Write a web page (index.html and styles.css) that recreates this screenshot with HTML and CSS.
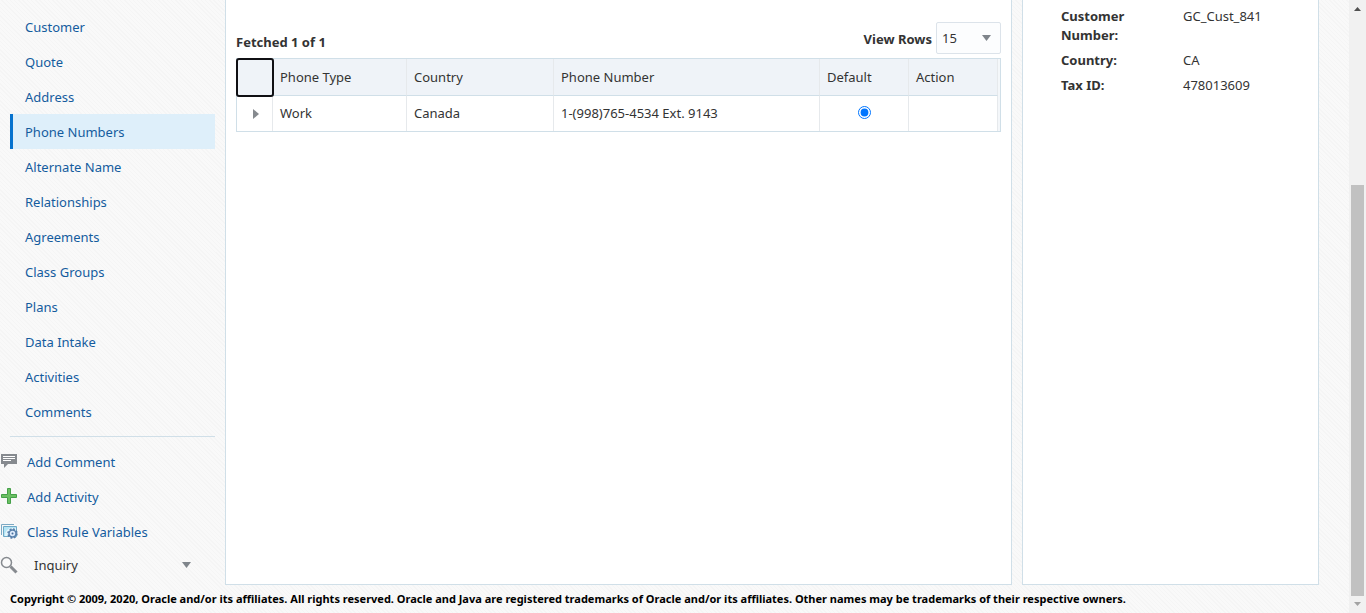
FILE: index.html
```html
<!DOCTYPE html>
<html lang="en">
<head>
<meta charset="utf-8">
<title>Phone Numbers</title>
<link rel="stylesheet" href="styles.css">
</head>
<body>
<div class="page">
  <div class="columns">
    <aside class="sidebar">
      <nav class="nav">
        <a class="nav-link" href="#">Customer</a>
        <a class="nav-link" href="#">Quote</a>
        <a class="nav-link" href="#">Address</a>
        <a class="nav-link nav-link-active" href="#" aria-current="page">Phone Numbers</a>
        <a class="nav-link" href="#">Alternate Name</a>
        <a class="nav-link" href="#">Relationships</a>
        <a class="nav-link" href="#">Agreements</a>
        <a class="nav-link" href="#">Class Groups</a>
        <a class="nav-link" href="#">Plans</a>
        <a class="nav-link" href="#">Data Intake</a>
        <a class="nav-link" href="#">Activities</a>
        <a class="nav-link" href="#">Comments</a>
      </nav>
      <div class="actions">
        <a class="action" href="#">
          <svg class="icon" viewBox="0 0 18 18" aria-hidden="true"><path fill="#868a8f" d="M1 2h16v10H8l-4 4v-4H1z"/><path stroke="#fff" d="M3 4.500h12M3 6.500h12M3 8.500h8"/></svg>
          <span>Add Comment</span>
        </a>
        <a class="action" href="#">
          <svg class="icon" viewBox="0 0 18 18" aria-hidden="true"><path fill="#6abf62" stroke="#45a049" stroke-linejoin="round" d="M7.500 1.500h3v6h6v3h-6v6h-3v-6h-6v-3h6z"/></svg>
          <span>Add Activity</span>
        </a>
        <a class="action" href="#">
          <svg class="icon" viewBox="0 0 18 18" aria-hidden="true"><path fill="none" stroke="#7ba9c4" d="M1.500 13V2.500H14"/><path fill="#b5e5f5" stroke="#6fa9c6" d="M3.500 4.500h13v10h-13z"/><path fill="#e4f6fc" d="M5 14a7 7 0 0 1 7-8h4v8z"/><circle cx="12.500" cy="11.500" r="4.500" fill="none" stroke="#587fab" stroke-width="1.500" stroke-dasharray="2 1.530"/><circle cx="12.500" cy="11.500" r="3.500" fill="#dceafa" stroke="#587fab" stroke-width="1.500"/><circle cx="12.500" cy="11.500" r="1" fill="#456c9c"/></svg>
          <span>Class Rule Variables</span>
        </a>
        <button class="inquiry" type="button" aria-haspopup="menu">
          <svg class="icon" viewBox="0 0 18 18" aria-hidden="true"><circle cx="6.500" cy="6.500" r="5" fill="#fafafa" stroke="#868a8f" stroke-width="1.500"/><path stroke="#868a8f" stroke-width="3" d="m10.500 10.500 6 6"/></svg>
          <span>Inquiry</span>
          <svg class="caret" viewBox="0 0 9 6" aria-hidden="true"><path fill="#7f858b" d="M0 0h9L4.500 6z"/></svg>
        </button>
      </div>
    </aside>
    <main class="panel">
      <div class="toolbar">
        <div class="fetched">Fetched 1 of 1</div>
        <div class="view-rows">
          <label class="view-label" for="rows">View Rows</label>
          <div class="select-box">
            <select class="select" id="rows"><option>15</option><option>30</option></select>
            <svg class="caret" viewBox="0 0 9 6" aria-hidden="true"><path fill="#7f858b" d="M0 0h9L4.500 6z"/></svg>
          </div>
        </div>
      </div>
      <div class="table-frame">
        <table class="table">
          <colgroup><col class="col-toggle"><col class="col-type"><col class="col-country"><col><col class="col-small"><col class="col-small"></colgroup>
          <thead>
            <tr><th class="focused" aria-label="Details"></th><th>Phone Type</th><th>Country</th><th>Phone Number</th><th>Default</th><th>Action</th></tr>
          </thead>
          <tbody>
            <tr>
              <td class="center"><button class="toggle" type="button" aria-label="Expand row"><svg class="toggle-icon" viewBox="0 0 6 10" aria-hidden="true"><path fill="#868a8f" d="M0 0l6 5-6 5z"/></svg></button></td>
              <td>Work</td><td>Canada</td><td>1-(998)765-4534 Ext. 9143</td>
              <td class="center"><input class="radio" type="radio" name="default" aria-label="Default" checked></td>
              <td></td>
            </tr>
          </tbody>
        </table>
      </div>
    </main>
    <aside class="panel details">
      <dl class="fields">
        <dt>Customer Number:</dt><dd>GC_Cust_841</dd>
        <dt>Country:</dt><dd>CA</dd>
        <dt>Tax ID:</dt><dd>478013609</dd>
      </dl>
    </aside>
  </div>
  <footer class="footer">Copyright © 2009, 2020, Oracle and/or its affiliates. All rights reserved. Oracle and Java are registered trademarks of Oracle and/or its affiliates. Other names may be trademarks of their respective owners.</footer>
</div>
<div class="scrollbar" aria-hidden="true">
  <svg class="scroll-arrow" viewBox="0 0 17 17"><path fill="#505050" d="M5 11h7L8.500 7z"/></svg>
  <div class="scroll-track"><div class="scroll-thumb"></div></div>
  <svg class="scroll-arrow" viewBox="0 0 17 17"><path fill="#a3a3a3" d="M5 6h7l-3.500 4z"/></svg>
</div>
</body>
</html>
```
FILE: styles.css
```css
* {
  box-sizing: border-box;
}

body {
  margin: 0;
  min-height: 100vh;
  display: flex;
  font: 13px/19px "Noto Sans", "Open Sans", sans-serif;
  color: #333;
  background: repeating-linear-gradient(45deg, #f9f9f9 0 2px, #f5f5f5 2px 3px);
}

.page {
  flex: 1;
  min-width: 0;
  display: flex;
  flex-direction: column;
}

.columns {
  flex: 1;
  display: grid;
  grid-template-columns: 215px minmax(0, 1fr) 297px;
  gap: 10px;
  padding-right: 30px;
}

.nav {
  display: flex;
  flex-direction: column;
  margin-left: 10px;
  padding: 9px 0 7px;
  border-bottom: 1px solid #d0dfe8;
}

.nav-link {
  padding: 9px 12px 7px;
  border-left: 3px solid transparent;
  color: #145c9e;
  text-decoration: none;
}

.nav-link-active {
  border-color: #0572ce;
  background: #deeffa;
}

.actions {
  padding-top: 8px;
}

.action {
  display: flex;
  align-items: center;
  gap: 9px;
  height: 35px;
  color: #145c9e;
  text-decoration: none;
}

.icon {
  width: 18px;
  height: 18px;
  flex: none;
}

.action .icon {
  margin-bottom: 4px;
}

.inquiry {
  display: flex;
  align-items: center;
  gap: 16px;
  width: 191px;
  height: 30px;
  padding: 0;
  border: 0;
  background: none;
  font: inherit;
  color: #333;
}

.inquiry .caret {
  margin-left: auto;
}

.caret {
  width: 9px;
  height: 6px;
}

.panel {
  padding: 22px 10px 10px;
  background: #fff;
  border: 1px solid #d0dfe8;
  border-top: 0;
}

.toolbar {
  display: flex;
  justify-content: space-between;
  padding-bottom: 4px;
  font-weight: 700;
}

.fetched {
  padding-top: 11px;
}

.view-rows {
  display: flex;
  align-items: center;
  gap: 4px;
}

.view-label {
  padding-top: 2px;
}

.select-box {
  display: grid;
  align-items: center;
}

.select {
  grid-area: 1 / 1;
  appearance: none;
  width: 65px;
  height: 32px;
  padding: 0 5px;
  border: 1px solid #dce3ea;
  border-radius: 2px;
  background: #fcfdfe;
  font: inherit;
  font-weight: 400;
  color: #333;
}

.select-box .caret {
  grid-area: 1 / 1;
  justify-self: end;
  margin-right: 10px;
  pointer-events: none;
}

.table-frame {
  padding-right: 2px;
  border: 1px solid #d0dfe8;
  background: #f4f7fa;
}

.table {
  width: 100%;
  table-layout: fixed;
  border-collapse: separate;
  border-spacing: 0;
  background: #fff;
}

.col-toggle {
  width: 36px;
}

.col-type {
  width: 134px;
}

.col-country {
  width: 147px;
}

.col-small {
  width: 89px;
}

.table th,
.table td {
  height: 35px;
  padding: 0 7px;
  border-right: 1px solid #e6e9ec;
  text-align: left;
  font-weight: 400;
}

.table th {
  height: 37px;
  background: #eff3f8;
  border-bottom: 1px solid #d0dfe8;
}

.table .center {
  padding: 0;
  text-align: center;
}

.table .focused {
  outline: 2px solid #101014;
  outline-offset: -1px;
  border-right: 0;
  border-radius: 2px;
}

.toggle {
  display: block;
  margin: 0 auto;
  padding: 4px 3px 4px 5px;
  border: 0;
  background: none;
}

.toggle-icon {
  display: block;
  width: 6px;
  height: 10px;
}

.radio {
  display: block;
  width: 13px;
  height: 13px;
  margin: 0 auto 2px;
}

.details {
  padding: 7px 38px;
}

.fields {
  display: grid;
  grid-template-columns: 88px 1fr;
  gap: 6px 34px;
  margin: 0;
}

.fields dt {
  font-weight: 700;
}

.fields dd {
  margin: 0;
}

.footer {
  padding: 4px 10px 5px;
  font-size: 11px;
  font-weight: 700;
  color: #000;
}

.scrollbar {
  display: flex;
  flex-direction: column;
  width: 17px;
  background: #f1f1f1;
}

.scroll-arrow {
  width: 17px;
  height: 17px;
}

.scroll-track {
  flex: 1;
  display: flex;
  flex-direction: column;
  justify-content: flex-end;
  padding: 0 2px;
}

.scroll-thumb {
  height: 71%;
  background: #c1c1c1;
}
```
